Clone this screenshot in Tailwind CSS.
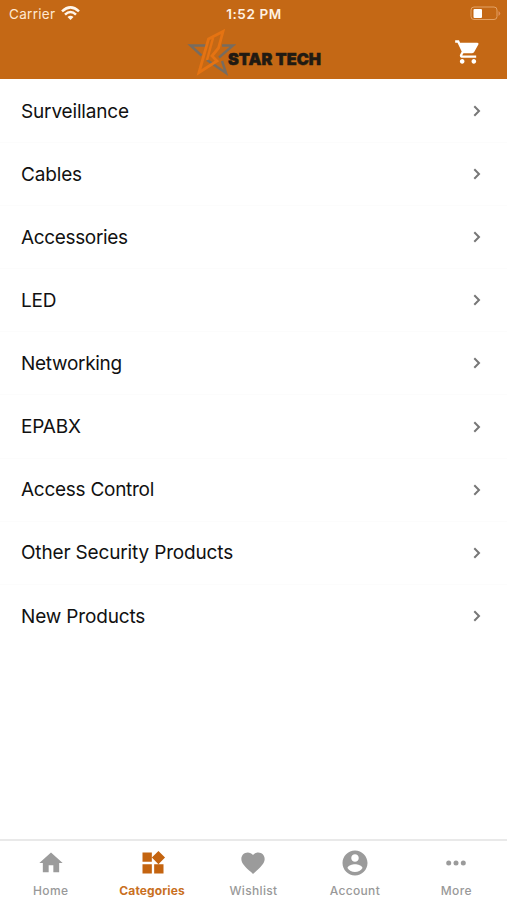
<!DOCTYPE html>
<html lang="en"><head><meta charset="utf-8"><title>Categories</title>
<script src="https://cdn.jsdelivr.net/npm/@tailwindcss/browser@4"></script></head>
<body class="bg-white font-['Inter',sans-serif]">
<div class="flex h-[900px] w-[507px] flex-col overflow-hidden">
<header class="h-[79px] shrink-0 bg-[#c46815] text-white">
<div class="grid h-7 grid-cols-3 items-center pl-[9px] pr-[6px]">
<div class="flex items-center gap-[6px] text-[#ffe9d2]"><span class="text-[13.500px] tracking-[0.3px]">Carrier</span>
<svg class="-mt-[2px] h-[15px] w-[19px]" viewBox="0 0 19 15" fill="none" stroke="#fff6ec" stroke-width="2.5"><path d="M1 5.3Q9.500-2.500 18 5.300M4 8.600Q9.500 3.300 15 8.600"/><path d="M6.500 11Q9.500 8.500 12.500 11L9.500 14Z" fill="#fff6ec" stroke="none"/></svg></div>
<div class="-ml-[2px] pt-px text-center text-[13.500px] font-semibold tracking-[0.600px] text-[#fff1e2]">1:52 PM</div>
<svg class="-mt-[2px] h-[15px] w-[31px] justify-self-end" viewBox="0 0 31 15"><rect x="1" y="1" width="26" height="12.500" rx="3" fill="none" stroke="#e3a266"/><rect x="3.500" y="3" width="8.500" height="9" rx="1" fill="#fff"/><path d="M28.500 5Q32 7.300 28.500 10Z" fill="#e08f5b"/></svg>
</div>
<div class="flex h-[51px] justify-between pl-[186px] pr-[25px]">
<svg class="h-[51px] w-[138px]" viewBox="186 28 138 51"><g fill="none" stroke-width="2.400"><path d="M206 45.500H190.500L201.500 55.500M222 45.500H233L219 57.500M207 60L226 73L222 61" stroke="#776c60"/><path d="M199 72.500L208.500 39L223 31.500L218.500 48L212 56L217 61L199 72.500Z" stroke="#e57312" stroke-width="2.800"/><path d="M213 38L207 60" stroke="#e57312" stroke-width="2.500"/></g><text x="228" y="65.300" textLength="93" lengthAdjust="spacingAndGlyphs" font-family="Inter" font-size="16.500" font-weight="900" fill="#211a12" stroke="#211a12" stroke-width=".5">STAR TECH</text></svg>
<svg class="mt-[10px] h-7 w-7" viewBox="0 0 24 24" fill="#fff"><path d="M7 18c-1.100 0-1.990.9-1.990 2S5.900 22 7 22s2-.9 2-2-.9-2-2-2zM1 2v2h2l3.600 7.590-1.350 2.450c-.16.280-.25.610-.25.960 0 1.100.9 2 2 2h12v-2H7.420c-.14 0-.25-.11-.25-.25l.03-.12.9-1.630h7.450c.75 0 1.410-.41 1.750-1.030l3.580-6.490A1 1 0 0 0 20 4H5.210l-.94-2H1zm16 16c-1.100 0-1.990.9-1.990 2s.89 2 1.990 2 2-.9 2-2-.9-2-2-2z"/></svg>
</div>
</header>
<svg class="hidden"><symbol id="chev" viewBox="0 0 8 12"><path d="M1.300 1.300L6 6L1.300 10.700" fill="none" stroke="#777" stroke-width="2"/></symbol></svg>
<main class="grow text-[19px] tracking-[-0.160px] text-[#111]">
<ul class="pt-[1px]">
<li class="flex h-[63.100px] items-center justify-between border-b border-[#fcfcfc] pl-[21px] pr-[26px]"><span class="pt-[2px]">Surveillance</span><svg class="h-3 w-2"><use href="#chev"/></svg></li>
<li class="flex h-[63.100px] items-center justify-between border-b border-[#fcfcfc] pl-[21px] pr-[26px]"><span class="pt-[2px]">Cables</span><svg class="h-3 w-2"><use href="#chev"/></svg></li>
<li class="flex h-[63.100px] items-center justify-between border-b border-[#fcfcfc] pl-[21px] pr-[26px]"><span class="pt-[2px] tracking-[-0.350px]">Accessories</span><svg class="h-3 w-2"><use href="#chev"/></svg></li>
<li class="flex h-[63.100px] items-center justify-between border-b border-[#fcfcfc] pl-[21px] pr-[26px]"><span class="pt-[2px]">LED</span><svg class="h-3 w-2"><use href="#chev"/></svg></li>
<li class="flex h-[63.100px] items-center justify-between border-b border-[#fcfcfc] pl-[21px] pr-[26px]"><span class="pt-[2px] tracking-[-0.300px]">Networking</span><svg class="h-3 w-2"><use href="#chev"/></svg></li>
<li class="flex h-[63.100px] items-center justify-between border-b border-[#fcfcfc] pl-[21px] pr-[26px]"><span class="pt-[2px]">EPABX</span><svg class="h-3 w-2"><use href="#chev"/></svg></li>
<li class="flex h-[63.100px] items-center justify-between border-b border-[#fcfcfc] pl-[21px] pr-[26px]"><span class="pt-[2px] tracking-[-0.270px]">Access Control</span><svg class="h-3 w-2"><use href="#chev"/></svg></li>
<li class="flex h-[63.100px] items-center justify-between border-b border-[#fcfcfc] pl-[21px] pr-[26px]"><span class="pt-[2px]">Other Security Products</span><svg class="h-3 w-2"><use href="#chev"/></svg></li>
<li class="flex h-[63.100px] items-center justify-between pl-[21px] pr-[26px]"><span class="pt-[2px]">New Products</span><svg class="h-3 w-2"><use href="#chev"/></svg></li>
</ul>
</main>
<nav class="grid h-[61px] shrink-0 grid-cols-5 border-t-2 border-[#e9e9e9] text-[12px] font-medium leading-4 tracking-[0.350px] text-[#999]">
<a class="flex flex-col items-center gap-[6px] pt-2"><svg class="size-7" viewBox="0 0 24 24" fill="#9b9b9b"><path d="M10 20v-6h4v6h5v-8h3L12 3 2 12h3v8z"/></svg>Home</a>
<a class="flex flex-col items-center gap-[6px] pt-2 font-bold tracking-[0.120px] text-[#c9701f]"><svg class="ml-[2px] size-7" viewBox="0 0 24 24" fill="#c46410"><path d="M13 13v8h8v-8h-8zM3 21h8v-8H3v8zM3 3v8h8V3H3zm13.660-1.310L11 7.340 16.660 13l5.660-5.660-5.660-5.650z"/></svg>Categories</a>
<a class="flex flex-col items-center gap-[6px] pt-2"><svg class="size-7" viewBox="0 0 24 24" fill="#9b9b9b"><path d="M12 21.350l-1.450-1.320C5.400 15.360 2 12.280 2 8.500 2 5.420 4.420 3 7.500 3c1.740 0 3.410.81 4.500 2.090C13.090 3.810 14.760 3 16.500 3 19.580 3 22 5.420 22 8.500c0 3.780-3.400 6.860-8.550 11.540L12 21.350z"/></svg>Wishlist</a>
<a class="flex flex-col items-center gap-[6px] pt-2"><svg class="size-[30px] -m-px" viewBox="0 0 24 24" fill="#9b9b9b"><path d="M12 2C6.480 2 2 6.480 2 12s4.480 10 10 10 10-4.480 10-10S17.520 2 12 2zm0 3c1.660 0 3 1.340 3 3s-1.340 3-3 3-3-1.340-3-3 1.340-3 3-3zm0 14.200c-2.500 0-4.710-1.280-6-3.220.03-1.990 4-3.080 6-3.080 1.990 0 5.970 1.090 6 3.080-1.290 1.940-3.500 3.220-6 3.220z"/></svg>Account</a>
<a class="flex flex-col items-center gap-[6px] pt-2"><svg class="size-7" viewBox="0 0 28 28" fill="#9b9b9b"><circle cx="6.700" cy="14" r="2.500"/><circle cx="14" cy="14" r="2.500"/><circle cx="21.300" cy="14" r="2.500"/></svg>More</a>
</nav>
</div></body></html>
